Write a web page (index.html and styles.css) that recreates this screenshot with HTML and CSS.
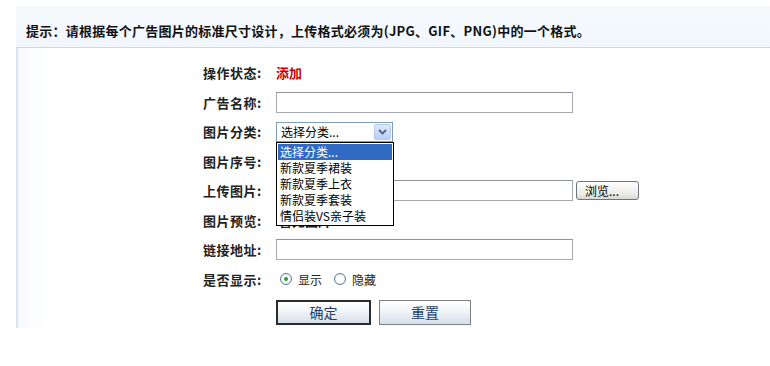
FILE: index.html
```html
<!DOCTYPE html>
<html lang="zh-CN">
<head>
<meta charset="utf-8">
<title>广告管理</title>
<link rel="stylesheet" href="styles.css">
</head>
<body>
<div class="tip">提示：请根据每个广告图片的标准尺寸设计，上传格式必须为(JPG、GIF、PNG)中的一个格式。</div>
<div class="panel">
  <div class="form">
    <div class="row"><span class="label">操作状态:</span><span class="status">添加</span></div>
    <div class="row"><span class="label">广告名称:</span><span class="input wide"></span></div>
    <div class="row"><span class="label">图片分类:</span>
      <div class="select">
        <span class="select-text">选择分类...</span>
        <span class="select-arrow"><svg width="9" height="6" viewBox="0 0 9 6"><path d="M1 1 L4.5 4.5 L8 1" fill="none" stroke="#4d6185" stroke-width="1.8"/></svg></span>
        <ul class="dropdown">
          <li class="active">选择分类...</li>
          <li>新款夏季裙装</li>
          <li>新款夏季上衣</li>
          <li>新款夏季套装</li>
          <li>情侣装VS亲子装</li>
        </ul>
      </div>
    </div>
    <div class="row"><span class="label">图片序号:</span></div>
    <div class="row"><span class="label">上传图片:</span><span class="input wide"></span><span class="browse">浏览...</span></div>
    <div class="row"><span class="label">图片预览:</span><span class="preview">暂无图片</span></div>
    <div class="row"><span class="label">链接地址:</span><span class="input wide"></span></div>
    <div class="row"><span class="label">是否显示:</span>
      <span class="radio checked"></span><span class="radio-text">显示</span>
      <span class="radio"></span><span class="radio-text">隐藏</span>
    </div>
    <div class="buttons">
      <span class="btn primary">确定</span>
      <span class="btn">重置</span>
    </div>
  </div>
</div>
</body>
</html>
```

FILE: styles.css
```css
* { box-sizing: border-box; }
html, body { margin: 0; padding: 0; background: #fff; }
body {
  font-family: "Noto Sans CJK SC", "DejaVu Sans", sans-serif;
  color: #111;
  width: 770px;
  height: 366px;
  overflow: hidden;
}
.tip {
  margin: 6px 0 0 16px;
  height: 42px;
  padding: 8px 0 0 10px;
  line-height: 33px;
  font-size: 13px;
  font-weight: bold;
  letter-spacing: 0.25px;
  color: #111;
  background: linear-gradient(#f6faff, #f2f7fd);
  border-bottom: 1px solid #c8d8ea;
  white-space: nowrap;
}
.panel {
  margin-left: 16px;
  height: 280px;
  border-left: 2px solid #d9e5f2;
  background: linear-gradient(to right, #f6f9fd 0, #fff 30px);
  padding-top: 10px;
}
.form { margin-left: 185px; }
.row {
  display: flex;
  align-items: center;
  height: 29.5px;
  position: relative;
}
.label {
  width: 73px;
  flex: none;
  font-size: 13px;
  font-weight: bold;
  letter-spacing: 0.5px;
  color: #222;
  white-space: nowrap;
}
.status { color: #cc0000; font-weight: bold; font-size: 13px; }
.input {
  display: block;
  height: 21px;
  border: 1px solid #a7abb0;
  border-top-color: #8f949a;
  background: #fff;
}
.wide { width: 297px; }
.browse {
  margin-left: 3px;
  width: 63px;
  height: 19px;
  border: 1px solid #6f757c;
  border-radius: 3px;
  background: linear-gradient(#ffffff, #ecebe6 70%, #d8d8d2);
  font-size: 12px;
  line-height: 17px;
  padding-left: 8px;
  color: #000;
}
.preview { font-size: 13px; font-weight: bold; color: #222; margin-left: 3px; }
.select {
  position: relative;
  width: 117px;
  height: 20px;
  border: 1px solid #7f9db9;
  background: #fff;
  display: flex;
  align-items: center;
  z-index: 5;
}
.select-text { font-size: 12px; padding-left: 4px; flex: 1; color: #000; }
.select-arrow {
  width: 17px;
  height: 16px;
  margin-right: 1px;
  background: linear-gradient(#dfe8fd, #b9cdf6);
  border: 1px solid #b6c8ef;
  border-radius: 2px;
  display: flex;
  align-items: center;
  justify-content: center;
}
.dropdown {
  position: absolute;
  left: -1px;
  top: 19px;
  width: 118px;
  margin: 0;
  padding: 1px;
  list-style: none;
  background: #fff;
  border: 1px solid #000;
}
.dropdown li {
  height: 16px;
  line-height: 16px;
  font-size: 12px;
  padding-left: 2px;
  color: #000;
  white-space: nowrap;
  overflow: hidden;
}
.dropdown li.active { background: #316ac5; color: #fff; }
.radio {
  width: 12px;
  height: 12px;
  border-radius: 50%;
  border: 1px solid #5b7a99;
  background: radial-gradient(#fff 40%, #e4e4de);
  margin-left: 4px;
  position: relative;
  flex: none;
}
.radio.checked::after {
  content: "";
  position: absolute;
  left: 3px; top: 3px;
  width: 4px; height: 4px;
  border-radius: 50%;
  background: #2aa12a;
}
.radio-text { font-size: 12px; margin-left: 6px; margin-right: 8px; color: #222; }
.buttons {
  display: flex;
  gap: 8px;
  margin-top: 6px;
  margin-left: 73px;
}
.btn {
  width: 92px;
  height: 25px;
  border: 1px solid #7b7f86;
  background: linear-gradient(#ffffff, #f1f4f8 45%, #d6dfea);
  font-size: 14px;
  line-height: 23px;
  text-align: center;
  color: #233f6a;
}
.btn.primary {
  width: 95px;
  border: 2px solid #2c2c2c;
  line-height: 21px;
}
```
